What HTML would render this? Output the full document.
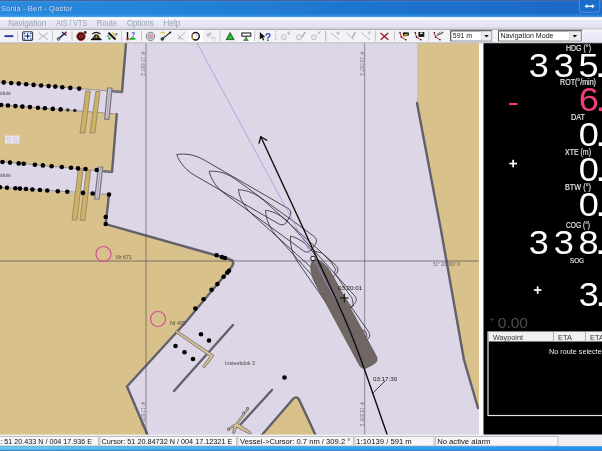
<!DOCTYPE html>
<html>
<head>
<meta charset="utf-8">
<title>Sonia - Bert - Qastor</title>
<style>
html,body{margin:0;padding:0;background:#000;}
body{width:602px;height:451px;overflow:hidden;position:relative;font-family:"Liberation Sans",sans-serif;}
svg{position:absolute;left:0;top:0;display:block;}
text{font-family:"Liberation Sans",sans-serif;}
.lbl{font-size:8.6px;fill:#ececec;stroke:#ececec;stroke-width:0.15px;}
.seg{font-size:32px;fill:#ffffff;}
.st{font-size:7.6px;fill:#101010;}
.mn{font-size:8.2px;fill:#9aa2b4;}
.tiny{font-size:4.5px;fill:#6c6874;}
</style>
</head>
<body>
<svg width="602" height="451" viewBox="0 0 602 451">
<defs>
<linearGradient id="gt" x1="0" y1="0" x2="1" y2="0">
<stop offset="0" stop-color="#2a8ade"/><stop offset="0.3" stop-color="#2482d8"/><stop offset="0.6" stop-color="#1e74ce"/><stop offset="1" stop-color="#1a68c6"/>
</linearGradient>
<linearGradient id="gt2" x1="0" y1="0" x2="0" y2="1">
<stop offset="0" stop-color="#f6f8ff" stop-opacity="0"/><stop offset="1" stop-color="#f6f8ff" stop-opacity="1"/>
</linearGradient>
<linearGradient id="gm" x1="0" y1="0" x2="0" y2="1">
<stop offset="0" stop-color="#ffffff"/><stop offset="0.12" stop-color="#fbfbff"/><stop offset="0.24" stop-color="#e8e8f8"/><stop offset="0.8" stop-color="#e3e3f5"/><stop offset="0.86" stop-color="#d2d2da"/><stop offset="1" stop-color="#d6d6dc"/>
</linearGradient>
<linearGradient id="gr" x1="0" y1="0" x2="0" y2="1">
<stop offset="0" stop-color="#ffffff"/><stop offset="0.15" stop-color="#f0f0fc"/><stop offset="1" stop-color="#e2e2f4"/>
</linearGradient>
<linearGradient id="gb" x1="0" y1="0" x2="1" y2="0">
<stop offset="0" stop-color="#62c8f0"/><stop offset="0.25" stop-color="#48b8f2"/><stop offset="0.5" stop-color="#30a8f8"/><stop offset="1" stop-color="#2094f4"/>
</linearGradient>
<filter id="bl" x="-5%" y="-5%" width="110%" height="110%"><feGaussianBlur stdDeviation="0.5"/></filter>
</defs>

<!-- ===== MAP ===== -->
<g id="map" filter="url(#bl)">
<rect x="0" y="43" width="480" height="393" fill="#dcd6e6"/>
<!-- land -->
<g fill="#d8c18a">
<polygon points="0,43 126,43 122,92 0,82"/>
<polygon points="0,104.7 116.8,114 112,172 0,161.5"/>
<polygon points="0,187.3 92,194.8 109,194.3 105.7,224.2 229,259 232.5,260.6 233.3,263.5 231.8,266.8 185,323 127,386.5 148,436 0,436"/>
<polygon points="417,43 479.5,43 479.5,409 478,408 464,360 441,230 417,103"/>
<path d="M261,436 L293,399 Q296.5,395.5 299,399.5 L316,436 Z"/>
</g>

<!-- coast lines -->
<g fill="none" stroke="#62616a" stroke-width="2.4" stroke-linejoin="round" stroke-linecap="round">
<polyline points="126,43.5 122,92 113,91.3"/>
<polyline points="116.8,114 112,172 104,171.3"/>
<polyline points="109,194.5 105.7,224.2 229,259 232.5,260.6 233.3,263.5 231.8,266.8 185,323 127,386.5 148,436"/>
<polyline points="417,103 441,230 464,360 478,408"/>
<path d="M261,436 L293,399 Q296.5,395.5 299,399.5 L316,436"/>
<line x1="233" y1="325" x2="174" y2="391"/>
<line x1="272" y1="390" x2="240" y2="425"/>
</g>
<g fill="none" stroke="#8a8790" stroke-width="0.8">
<line x1="0" y1="82" x2="122" y2="92"/>
<line x1="0" y1="104.7" x2="117" y2="114"/>
<line x1="0" y1="161.5" x2="112.5" y2="172"/>
<line x1="0" y1="187.3" x2="109" y2="194.4"/>
</g>
<!-- lock gates -->
<g fill="#ccb166" stroke="#8c8064" stroke-width="0.8">
<polygon points="85.8,91 90.4,91 84.9,133 80,133"/>
<polygon points="95.8,91.5 99.9,91.5 94.9,133 90,133"/>
<polygon points="78.2,170 83,170 77,220 72,220"/>
<polygon points="86.3,170.6 90.6,170.6 85,220.3 80,220.3"/>
</g>
<g fill="#d2ccd8" stroke="#77747c" stroke-width="1.2">
<polygon points="107.6,88 112,88 109,119.2 104.7,119.2"/>
<polygon points="98.4,167 102.7,167 99.2,199 94.7,199"/>
</g>
<g stroke="#8a8790" stroke-width="0.6"><line x1="109.8" y1="89" x2="106.9" y2="118.5"/><line x1="100.5" y1="168" x2="97" y2="198"/></g>
<!-- jetty -->
<g fill="#d8c18a" stroke="#77747c" stroke-width="0.9" stroke-linejoin="round">
<polygon points="175,332 177,330.5 214,355.5 204.5,368 202.5,366.5 210,356.5"/>
<path d="M235.5,424 L247,408.5 l1.5,1 L238,423.5 L251.5,432.5 l-1,2 L236.5,427 L234.5,433.5 l-2,-0.5 L234,426.5 L229,430 l-1,-1.5 L234,424.5 Z"/>
<rect x="242.5" y="412" width="2" height="2"/><rect x="246.5" y="407.5" width="2" height="2"/><rect x="227.5" y="428.5" width="2" height="2"/>
</g>
<!-- dots -->
<g fill="#000000">
<circle cx="3.7" cy="82.4" r="2.3"/><circle cx="11.2" cy="83.0" r="2.3"/><circle cx="18.7" cy="83.6" r="2.3"/><circle cx="26.2" cy="84.2" r="2.3"/><circle cx="33.6" cy="84.9" r="2.3"/><circle cx="41.1" cy="85.5" r="2.3"/><circle cx="48.6" cy="86.1" r="2.3"/><circle cx="55.3" cy="86.6" r="2.3"/><circle cx="62.3" cy="87.2" r="2.3"/><circle cx="70.3" cy="87.9" r="2.3"/><circle cx="79.2" cy="88.6" r="2.3"/><circle cx="1.2" cy="105.0" r="2.3"/><circle cx="8.0" cy="105.5" r="2.3"/><circle cx="15.4" cy="106.1" r="2.3"/><circle cx="22.4" cy="106.6" r="2.3"/><circle cx="29.9" cy="107.1" r="2.3"/><circle cx="37.9" cy="107.7" r="2.3"/><circle cx="44.9" cy="108.3" r="2.3"/><circle cx="52.8" cy="108.9" r="2.3"/><circle cx="60.6" cy="109.4" r="2.3"/><circle cx="2.5" cy="162.0" r="2.3"/><circle cx="10.0" cy="162.6" r="2.3"/><circle cx="18.7" cy="163.4" r="2.3"/><circle cx="23.7" cy="163.8" r="2.3"/><circle cx="34.9" cy="164.8" r="2.3"/><circle cx="42.9" cy="165.4" r="2.3"/><circle cx="51.6" cy="166.2" r="2.3"/><circle cx="61.8" cy="167.0" r="2.3"/><circle cx="71.0" cy="167.8" r="2.3"/><circle cx="78.0" cy="168.4" r="2.3"/><circle cx="85.5" cy="169.0" r="2.3"/><circle cx="96.7" cy="170.0" r="2.3"/><circle cx="0.0" cy="187.3" r="2.3"/><circle cx="7.0" cy="187.8" r="2.3"/><circle cx="15.4" cy="188.3" r="2.3"/><circle cx="20.0" cy="188.6" r="2.3"/><circle cx="26.0" cy="189.0" r="2.3"/><circle cx="32.4" cy="189.5" r="2.3"/><circle cx="39.9" cy="190.0" r="2.3"/><circle cx="47.3" cy="190.5" r="2.3"/><circle cx="57.8" cy="191.2" r="2.3"/><circle cx="67.3" cy="191.8" r="2.3"/><circle cx="83.0" cy="192.9" r="2.3"/><circle cx="92.7" cy="193.5" r="2.3"/><circle cx="109.0" cy="194.6" r="2.3"/>
<circle cx="105.7" cy="217" r="2.3"/><circle cx="105.7" cy="224" r="2.3"/>
<circle cx="216.6" cy="255.3" r="2.3"/><circle cx="221.9" cy="257.1" r="2.3"/><circle cx="224.9" cy="258" r="2.3"/>
<circle cx="229" cy="270.8" r="2.3"/><circle cx="227.4" cy="272.6" r="2.3"/><circle cx="223.6" cy="276.8" r="2.3"/><circle cx="217.4" cy="284.1" r="2.3"/>
<circle cx="211.6" cy="289.7" r="2.3"/><circle cx="203.6" cy="299.2" r="2.3"/><circle cx="195.3" cy="308.5" r="2.3"/>
<circle cx="201" cy="334.3" r="2.3"/><circle cx="209" cy="340.5" r="2.3"/>
<circle cx="175.5" cy="346" r="2.3"/><circle cx="184.5" cy="352.3" r="2.3"/><circle cx="193" cy="359" r="2.3"/>
<circle cx="284.5" cy="377.5" r="2.3"/>
</g>
<g fill="#2a2a2e"><circle cx="67.8" cy="110" r="1.8"/><circle cx="74.8" cy="110.5" r="1.8"/></g>

<!-- grid lines -->
<g stroke="#3c3846" stroke-opacity="0.4" stroke-width="1.3" fill="none">
<line x1="146" y1="43" x2="146" y2="436"/>
<line x1="364.6" y1="43" x2="364.6" y2="436"/>
<line x1="0" y1="261" x2="480" y2="261"/>
</g>
<g class="tiny">
<text transform="translate(140.5,51.5) rotate(90)" class="tiny">4° 17.500' E</text>
<text transform="translate(359.6,51.5) rotate(90)" class="tiny">4° 18.000' E</text>
<text transform="translate(140.5,402) rotate(90)" class="tiny">4° 17.500' E</text>
<text transform="translate(359.6,402) rotate(90)" class="tiny">4° 18.000' E</text>
<text x="433" y="266" class="tiny">51° 20.500' N</text>
</g>
<!-- place labels -->
<g font-size="5.3" fill="#4a4a4a">
<text x="0" y="94.8">sluis</text>
<text x="0" y="176.5">sluis</text>
<text x="116" y="259">Nr 671</text>
<text x="170" y="324.5">Nr 465</text>
<text x="225" y="365">Insteekdok 3</text>
</g>
<rect x="5" y="135.5" width="14.5" height="8" fill="#e9e0f2"/>
<text x="6.5" y="142.3" font-size="7" fill="#c8c4d0">S S</text>
<!-- pink circles -->
<g fill="none" stroke="#d0509a" stroke-width="1.2">
<circle cx="103.5" cy="254" r="7.5"/>
<circle cx="158" cy="319" r="7.5"/>
</g>
<!-- predicted outlines -->
<g fill="none" stroke="#2a2a30" stroke-width="0.75" stroke-linejoin="round">
<path transform="translate(177.5,153.3) rotate(-60) translate(-1.5,0)" d="M0,0 C2.5,3 9,11.7 9,26 L9,123 Q9,128 4,128.8 L-4,128.8 Q-9,128 -9,123 L-9,26 C-9,11.7 -2.5,3 0,0 Z"/>
<path transform="translate(210,170) rotate(-54) translate(-1.5,0)" d="M0,0 C2.5,3 9,11.7 9,26 L9,123 Q9,128 4,128.8 L-4,128.8 Q-9,128 -9,123 L-9,26 C-9,11.7 -2.5,3 0,0 Z"/>
<path transform="translate(239.4,188.6) rotate(-48) translate(-1.5,0)" d="M0,0 C2.5,3 9,11.7 9,26 L9,123 Q9,128 4,128.8 L-4,128.8 Q-9,128 -9,123 L-9,26 C-9,11.7 -2.5,3 0,0 Z"/>
<path transform="translate(266.7,209.3) rotate(-42) translate(-1.5,0)" d="M0,0 C2.5,3 9,11.7 9,26 L9,123 Q9,128 4,128.8 L-4,128.8 Q-9,128 -9,123 L-9,26 C-9,11.7 -2.5,3 0,0 Z"/>
<path transform="translate(291.8,235.2) rotate(-35) translate(-1.5,0)" d="M0,0 C2.5,3 9,11.7 9,26 L9,123 Q9,128 4,128.8 L-4,128.8 Q-9,128 -9,123 L-9,26 C-9,11.7 -2.5,3 0,0 Z"/>
<path d="M314,251 L322,253 L331,262 L336,270 L334,272 L346,290 L352,298 L353.5,306 L349,309 L359,328 L366,332 L367,337 L360,340 L352,326"/>
</g>
<!-- blue line -->
<!-- vessel -->
<path transform="translate(313.4,259.9) rotate(-28.4)" d="M0,-0.5 C3.5,0.5 9.6,7.7 9.6,22 L9.6,114.5 Q9.6,119.5 4.6,120.3 L-4.6,120.3 Q-9.6,119.5 -9.6,114.5 L-9.6,22 C-9.6,7.7 -3.5,0.5 0,-0.5 Z" fill="#6f6664" stroke="#5a5456" stroke-width="0.6"/>
<line x1="197" y1="43" x2="337" y2="302.5" stroke="#a494e2" stroke-width="0.75"/>
<!-- COG vector -->
<g stroke="#101010" stroke-width="1.4" fill="none" stroke-linecap="round">
<path d="M260.8,136.8 L335.5,298 Q351,331 364,368 L387.3,435"/>
<polyline points="259,143.2 260.8,136.8 266.8,140.2" stroke-width="1.3"/>
<line x1="385" y1="381" x2="373" y2="393" stroke-width="0.8"/>
</g>
<circle cx="313" cy="258.5" r="2.3" fill="#f4f2f8" stroke="#101010" stroke-width="1"/>
<g stroke="#101010" stroke-width="1.1"><line x1="340" y1="298" x2="348.5" y2="298"/><line x1="344.3" y1="293.5" x2="344.3" y2="302.5"/></g>
<g font-size="6.2" fill="#1a1a1a">
<text x="338" y="289.5">03:20:01</text>
<text x="373" y="380.5">03:17:30</text>
</g>
</g>

<!-- ===== RIGHT PANEL ===== -->
<g id="panel" filter="url(#bl)">
<rect x="479" y="43" width="5" height="393" fill="#fbfaff"/>
<rect x="483.5" y="43" width="119" height="391.5" fill="#000000"/>
<g class="lbl">
<text x="566" y="51" lengthAdjust="spacingAndGlyphs" textLength="25">HDG (°)</text>
<text x="560" y="85.3" lengthAdjust="spacingAndGlyphs" textLength="36">ROT(°/min)</text>
<text x="571" y="120" lengthAdjust="spacingAndGlyphs" textLength="14">DAT</text>
<text x="565" y="155" lengthAdjust="spacingAndGlyphs" textLength="26">XTE (m)</text>
<text x="565" y="190" lengthAdjust="spacingAndGlyphs" textLength="26">BTW (°)</text>
<text x="566" y="228" lengthAdjust="spacingAndGlyphs" textLength="24">COG (°)</text>
<text x="570" y="263" font-size="7.6" lengthAdjust="spacingAndGlyphs" textLength="14">SOG</text>
</g>
<g class="seg">
<text transform="translate(528.7,76.5) scale(1.13,1.045)" letter-spacing="4.3">335<tspan dx="-7.3">.</tspan></text>
<text transform="translate(578.7,110.5) scale(1.13,1.045)" letter-spacing="4.3" style="fill:#ee3e7c">6<tspan dx="-7.3">.</tspan></text>
<text transform="translate(578.7,145.5) scale(1.13,1.045)" letter-spacing="4.3">0<tspan dx="-7.3">.</tspan></text>
<text transform="translate(578.7,180.5) scale(1.13,1.045)" letter-spacing="4.3">0<tspan dx="-7.3">.</tspan></text>
<text transform="translate(578.7,216) scale(1.13,1.045)" letter-spacing="4.3">0<tspan dx="-7.3">.</tspan></text>
<text transform="translate(528.7,253.5) scale(1.13,1.045)" letter-spacing="4.3">338<tspan dx="-7.3">.</tspan></text>
<text transform="translate(578.7,306) scale(1.13,1.045)" letter-spacing="4.3">3<tspan dx="-7.3">.</tspan></text>
</g>
<rect x="509" y="103" width="8.5" height="2" fill="#ee3e7c"/>
<g fill="#ffffff">
<rect x="509.3" y="162.7" width="7.6" height="1.7"/><rect x="512.3" y="159.8" width="1.7" height="7.5"/>
<rect x="533.8" y="289.2" width="7.6" height="1.7"/><rect x="536.8" y="286.3" width="1.7" height="7.5"/>
</g>
<text x="489.5" y="328" font-size="15.5" fill="#4c4c4c" lengthAdjust="spacingAndGlyphs" textLength="38.5"><tspan font-size="9" dy="-5">+</tspan><tspan dy="5" dx="3">0.00</tspan></text>
<!-- table -->
<rect x="488" y="332" width="116" height="83.5" fill="#000" stroke="#e4e4e4" stroke-width="1.2"/>
<rect x="488.5" y="332" width="114" height="9.5" fill="#f1f1f1"/>
<g stroke="#a8a8a8" stroke-width="1"><line x1="553.5" y1="332" x2="553.5" y2="341.5"/><line x1="585.5" y1="332" x2="585.5" y2="341.5"/></g>
<g font-size="7.8" fill="#303030">
<text x="493" y="339.8" lengthAdjust="spacingAndGlyphs" textLength="30">Waypoint</text><text x="558" y="339.8" lengthAdjust="spacingAndGlyphs" textLength="14">ETA</text><text x="590" y="339.8" lengthAdjust="spacingAndGlyphs" textLength="14">ETA</text>
</g>
<text x="549" y="353.5" font-size="8" fill="#f0f0f0" lengthAdjust="spacingAndGlyphs" textLength="56.8">No route selected</text>
</g>

<!-- ===== TITLE / MENU / TOOLBAR ===== -->
<g id="chrome" filter="url(#bl)">
<rect x="0" y="0" width="602" height="18" fill="url(#gt)"/>
<rect x="0" y="0" width="602" height="1" fill="#44649a"/>
<rect x="0" y="1" width="602" height="1" fill="#ffffff" opacity="0.08"/>
<rect x="0" y="14.3" width="602" height="3" fill="#38a0f4" opacity="0.45"/>
<rect x="0" y="16.2" width="602" height="1.8" fill="url(#gt2)"/>
<text x="1.6" y="11.4" font-size="8" fill="#0a3a8a" opacity="0.7" lengthAdjust="spacingAndGlyphs" textLength="71.5">Sonia - Bert - Qastor</text>
<text x="1" y="10.8" font-size="8" fill="#cfe0f8" lengthAdjust="spacingAndGlyphs" textLength="71.5">Sonia - Bert - Qastor</text>
<rect x="579.3" y="-3" width="20.5" height="15.3" rx="2.5" fill="#1c6cca" stroke="#6aa4e6" stroke-width="0.7"/>
<path d="M584.5,6.2 l2.8,-2.3 v1.5 h4.6 v-1.5 l2.8,2.3 l-2.8,2.3 v-1.5 h-4.6 v1.5 z" fill="#eef4fd"/>
<rect x="0" y="17.5" width="602" height="12" fill="url(#gm)"/>
<g class="mn">
<text x="8.2" y="26.3" lengthAdjust="spacingAndGlyphs" textLength="38">Navigation</text>
<text x="56" y="26.3" lengthAdjust="spacingAndGlyphs" textLength="31.2">AIS / VTS</text>
<text x="96.7" y="26.3" lengthAdjust="spacingAndGlyphs" textLength="20.3">Route</text>
<text x="127" y="26.3" lengthAdjust="spacingAndGlyphs" textLength="26.7">Options</text>
<text x="163.5" y="26.3" lengthAdjust="spacingAndGlyphs" textLength="16.8">Help</text>
</g>
<rect x="0" y="29.5" width="602" height="13.5" fill="#f3f3f7"/>
<rect x="583" y="29.5" width="19" height="13.5" fill="url(#gr)"/>
<rect x="0" y="42.3" width="602" height="1" fill="#b9b9c2"/>

<!-- toolbar icons -->
<g id="tools">
<g stroke="#c4c4cc" stroke-width="1" fill="none">
<line x1="17.7" y1="31" x2="17.7" y2="41"/><line x1="52.4" y1="31" x2="52.4" y2="41"/><line x1="72" y1="31" x2="72" y2="41"/>
<line x1="121.5" y1="31" x2="121.5" y2="41"/><line x1="141.5" y1="31" x2="141.5" y2="41"/><line x1="220" y1="31" x2="220" y2="41"/>
<line x1="254.7" y1="31" x2="254.7" y2="41"/><line x1="375.4" y1="31" x2="375.4" y2="41"/><line x1="394.5" y1="31" x2="394.5" y2="41"/>
<line x1="428.8" y1="31" x2="428.8" y2="41"/>
</g>
<line x1="325.8" y1="31" x2="325.8" y2="41" stroke="#a4a4ac" stroke-width="0.9"/>
<line x1="275.7" y1="31" x2="275.7" y2="41" stroke="#b0b0b8" stroke-width="1.2" stroke-dasharray="1,1"/>
<!-- 1 minus -->
<rect x="4.4" y="35.2" width="9" height="1.9" fill="#2b3a9c"/>
<!-- 2 extents box -->
<rect x="22.6" y="31.8" width="10" height="8.6" rx="1.2" fill="#fafafa" stroke="#3c3c40" stroke-width="1.1"/>
<g stroke="#2f55c8" stroke-width="1.1"><line x1="24" y1="36.1" x2="31.2" y2="36.1"/><line x1="27.6" y1="33" x2="27.6" y2="39.2"/></g>
<g fill="#2f55c8"><circle cx="24.3" cy="33.4" r="0.9"/><circle cx="30.9" cy="33.4" r="0.9"/><circle cx="24.3" cy="38.8" r="0.9"/><circle cx="30.9" cy="38.8" r="0.9"/></g>
<circle cx="27.6" cy="36.1" r="1" fill="#101010"/>
<!-- 3 gray X -->
<g stroke="#b4bcbc" stroke-width="1.1" fill="none" stroke-linejoin="round"><path d="M38.8,32.6 L43,36.2 L38.8,39.9 M47.7,32.6 L43.5,36.2 L47.7,39.9"/></g>
<!-- 4 pointer tool -->
<g><line x1="58.8" y1="38.6" x2="65.2" y2="33" stroke="#1c2560" stroke-width="1.6"/><circle cx="58.5" cy="39" r="1.4" fill="#9098a8" stroke="#30343c" stroke-width="0.6"/><path d="M62,32 L66.5,35.5" stroke="#1c2560" stroke-width="1.2"/><circle cx="65.8" cy="32.6" r="1.1" fill="#d02020"/></g>
<!-- 5 red target -->
<g><circle cx="81" cy="36.4" r="4.2" fill="#2a0c0c" stroke="#b83030" stroke-width="1"/><circle cx="81" cy="36.4" r="2.5" fill="#c03434" stroke="#2a0c0c" stroke-width="0.7"/><circle cx="81" cy="36.4" r="1" fill="#2a0c0c"/><circle cx="85.3" cy="32.4" r="1.3" fill="#181818"/></g>
<!-- 6 lighthouse -->
<g><path d="M92,34.2 Q96.3,30.6 100.6,34.2" fill="none" stroke="#181818" stroke-width="1.1"/><path d="M92.3,38.9 L95,34.8 L97.8,34.8 L100.4,38.9 Z" fill="#3c3618" stroke="#181818" stroke-width="0.6"/><rect x="91" y="38.8" width="10.6" height="1.4" fill="#101010"/><path d="M95.2,37.8 L96.4,35.5 L97.6,37.8 Z" fill="#c8b030"/></g>
<!-- 7 diagonal tool -->
<g><line x1="108.5" y1="32.8" x2="115.5" y2="39.5" stroke="#101010" stroke-width="2"/><path d="M112,32.5 L116.5,36.5" stroke="#d8c840" stroke-width="1.6"/><circle cx="109.5" cy="38.5" r="1.3" fill="#30a040"/><circle cx="116.5" cy="34" r="1" fill="#3060d0"/><circle cx="108" cy="36" r="0.9" fill="#30a040"/></g>
<!-- 8 -->
<g><line x1="127.5" y1="32" x2="127.5" y2="39" stroke="#101010" stroke-width="1.4"/><rect x="126.5" y="38" width="2.2" height="2.3" fill="#c02020"/><path d="M129,39.8 Q130,36.5 133,37.5 Q136,37 135.5,39.8 Z" fill="#20b030"/><text x="131.3" y="36.6" font-size="6.5" font-weight="bold" style="fill:#2838b8">?</text></g>
<!-- 9 gray target -->
<g><circle cx="150.5" cy="36.4" r="4.2" fill="#e4e4e8" stroke="#7c7c84" stroke-width="1"/><circle cx="150.5" cy="36.4" r="2.4" fill="#f0c4cc" stroke="#8c8c94" stroke-width="0.8"/><circle cx="150.5" cy="36.4" r="0.9" fill="#e05070"/></g>
<!-- 10 route line w/ sparkle -->
<g><line x1="162.5" y1="38.8" x2="170" y2="32.6" stroke="#181818" stroke-width="1.1"/><circle cx="162.3" cy="39" r="1.4" fill="#505058" stroke="#101010" stroke-width="0.6"/><circle cx="170.2" cy="32.4" r="1" fill="#181818"/><path d="M160.3,33.6 L161.5,32 L162.3,33.3 L163.3,31.6 L164,33.3 L165.2,32.3" stroke="#d8c020" stroke-width="0.9" fill="none"/></g>
<!-- 11 gray -->
<g stroke="#b4b8bc" fill="none" stroke-width="1"><line x1="177.5" y1="39" x2="185" y2="32.4"/><path d="M178.5,34.5 L180,39.5 M180,37.5 L183.5,39.5"/></g>
<!-- 12 clock pressed -->
<rect x="189" y="30.2" width="13.5" height="11.8" fill="#ffffff"/>
<g><circle cx="195.6" cy="36.3" r="3.7" fill="#ffffff" stroke="#1c1c1c" stroke-width="1.5"/><path d="M192.3,34.2 A3.9,3.9 0 0 0 193.5,39.4" fill="none" stroke="#e0a820" stroke-width="1.2"/><path d="M195.6,36.3 L197.3,35" stroke="#707070" stroke-width="0.7"/></g>
<!-- 13 gray -->
<g fill="#c0c4c8"><path d="M206,35 Q209,31.5 212.5,33 L208,37.5 Z"/><path d="M211,37 l2,2 M213.5,36.5 l2,2.5" stroke="#c0c4c8" stroke-width="1.1"/><circle cx="214.8" cy="40" r="0.8"/></g>
<!-- 14 green triangle -->
<path d="M230.1,32.5 L234,39.6 L226.2,39.6 Z" fill="#18c428" stroke="#2a4a2a" stroke-width="0.9" stroke-linejoin="round"/>
<!-- 15 pressed -->
<rect x="239.3" y="30.2" width="14.3" height="11.8" fill="#ffffff"/>
<g><rect x="241.8" y="33" width="9" height="3.2" fill="#ffffff" stroke="#20242c" stroke-width="1.1"/><line x1="246" y1="36.5" x2="246" y2="38" stroke="#20242c" stroke-width="1"/><path d="M246,37.6 L248.3,40.5 L243.6,40.5 Z" fill="#18c428" stroke="#2a4a2a" stroke-width="0.6"/></g>
<!-- 16 help cursor -->
<g><path d="M259.8,32 L259.8,39.5 L261.8,37.8 L263.2,40.6 L264.3,40 L263,37.3 L265.3,37 Z" fill="#101010"/><text x="264.8" y="40.5" font-size="10.5" font-weight="bold" style="fill:#2848c0">?</text></g>
<!-- 17-19 gray circle tools -->
<g stroke="#b0b4b8" fill="none" stroke-width="0.9">
<circle cx="283.8" cy="37.2" r="2.5"/><path d="M286.8,33.2 h3.6 M288.6,31.4 v3.6"/>
<circle cx="299" cy="37.3" r="2.5"/><path d="M302,37 L305.3,32" stroke-width="1.5"/>
<circle cx="314" cy="37.2" r="2.5"/><path d="M317.6,31.3 l3,3 M320.6,31.3 l-3,3"/>
<path d="M330.6,32.7 L339.4,39.7"/><path d="M336.2,33.2 h3.6 M338,31.4 v3.6"/>
<path d="M346,32.7 L354,39.7"/><path d="M352,38 L355.5,32" stroke-width="1.5"/>
<path d="M361.5,32.7 L369.7,39.7"/><path d="M367.8,31.3 l3,3 M370.8,31.3 l-3,3"/>
</g>
<g fill="#b8bcc0"><circle cx="283.8" cy="37.2" r="0.6"/><circle cx="299" cy="37.3" r="0.6"/><circle cx="314" cy="37.2" r="0.6"/></g>
<!-- 23 red X -->
<path d="M380.5,32.9 L388.4,39.8 M388.2,32.9 L380.7,39.8" stroke="#a01422" stroke-width="1.3" fill="none"/>
<!-- 24 open route -->
<g><path d="M400,32.7 L401.3,37.1 L405.7,39.7" fill="none" stroke="#d02838" stroke-width="1"/><g fill="#181818"><circle cx="400" cy="32.7" r="0.8"/><circle cx="401.3" cy="37.1" r="0.8"/><circle cx="405.7" cy="39.7" r="0.8"/></g><path d="M402.6,33 L404,32.2 L408.8,32.6 L409,35.6 L403.5,36.5 Z" fill="#181818"/><path d="M404.3,34.3 L408,33.8 L407.3,35.4 L404,35.7 Z" fill="#d8b828"/></g>
<!-- 25 save route -->
<g><path d="M415.2,32.7 L416.5,37.1 L420.9,39.7" fill="none" stroke="#d02838" stroke-width="1"/><g fill="#181818"><circle cx="415.2" cy="32.7" r="0.8"/><circle cx="416.5" cy="37.1" r="0.8"/><circle cx="420.9" cy="39.7" r="0.8"/></g><rect x="418.4" y="32" width="5.9" height="4.9" fill="#181818"/><rect x="420" y="32.4" width="2.6" height="1.7" fill="#d8d8e0"/></g>
<!-- 26 -->
<g><path d="M434.3,32.7 L435.6,37.1 L440,39.7" fill="none" stroke="#d02838" stroke-width="1"/><g fill="#181818"><circle cx="434.3" cy="32.7" r="0.8"/><circle cx="435.6" cy="37.1" r="0.8"/><circle cx="440" cy="39.7" r="0.8"/></g><path d="M436.5,35.8 L443.5,32.3 M437.5,33 l1,2 M439.5,32.2 l1,2 M441.5,31.6 l0.8,1.6" stroke="#40444c" stroke-width="0.9" fill="none"/></g>
<!-- combos -->
<g>
<rect x="450.7" y="30.8" width="41" height="10.2" fill="#ffffff" stroke="#8c8c94" stroke-width="1"/>
<path d="M450.7,41 V30.8 H491.7" fill="none" stroke="#50505a" stroke-width="1"/>
<rect x="481.8" y="31.6" width="9.3" height="8.8" fill="#ececf0" stroke="#c8c8d0" stroke-width="0.6"/>
<path d="M484.2,35 h4.6 l-2.3,2.6 z" fill="#101010"/>
<text x="452.8" y="38.4" font-size="7.5" fill="#202020" lengthAdjust="spacingAndGlyphs" textLength="19.3">591 m</text>
<rect x="498.5" y="30.8" width="83" height="10.2" fill="#ffffff" stroke="#8c8c94" stroke-width="1"/>
<path d="M498.5,41 V30.8 H581.5" fill="none" stroke="#50505a" stroke-width="1"/>
<rect x="569.3" y="31.6" width="11.5" height="8.8" fill="#ececf0" stroke="#c8c8d0" stroke-width="0.6"/>
<path d="M572.5,35 h4.6 l-2.3,2.6 z" fill="#101010"/>
<text x="500.5" y="38.4" font-size="7.5" fill="#202020" lengthAdjust="spacingAndGlyphs" textLength="53">Navigation Mode</text>
</g>
</g>
</g>
<!-- ===== STATUS BAR ===== -->
<g id="status" filter="url(#bl)">
<rect x="0" y="434.5" width="602" height="12" fill="#eeeef2"/>
<g fill="#f7f7f9" stroke="#b4b4bc" stroke-width="0.8">
<rect x="-2" y="436.5" width="100.5" height="9.5"/>
<rect x="100" y="436.5" width="136.5" height="9.5"/>
<rect x="238" y="436.5" width="115.5" height="9.5"/>
<rect x="355" y="436.5" width="79" height="9.5"/>
<rect x="435.5" y="436.5" width="122.5" height="9.5"/>
</g>
<g class="st">
<text x="0.3" y="444.3" lengthAdjust="spacingAndGlyphs" textLength="91.8">: 51 20.433 N / 004 17.936 E</text>
<text x="101.5" y="444.3" lengthAdjust="spacingAndGlyphs" textLength="130.8">Cursor: 51 20.84732 N / 004 17.12321 E</text>
<text x="240" y="444.3" lengthAdjust="spacingAndGlyphs" textLength="110.3">Vessel-&gt;Cursor: 0.7 nm / 309.2 °</text>
<text x="356.3" y="444.3" lengthAdjust="spacingAndGlyphs" textLength="55.4">1:10139 / 591 m</text>
<text x="437.2" y="444.3" lengthAdjust="spacingAndGlyphs" textLength="53.2">No active alarm</text>
</g>
<rect x="0" y="446" width="602" height="1" fill="#8aa4bc"/>
<rect x="0" y="446.6" width="602" height="3.4" fill="url(#gb)"/>
<rect x="0" y="449.8" width="602" height="1.5" fill="#4480c0"/>
</g>

</svg>
</body>
</html>
